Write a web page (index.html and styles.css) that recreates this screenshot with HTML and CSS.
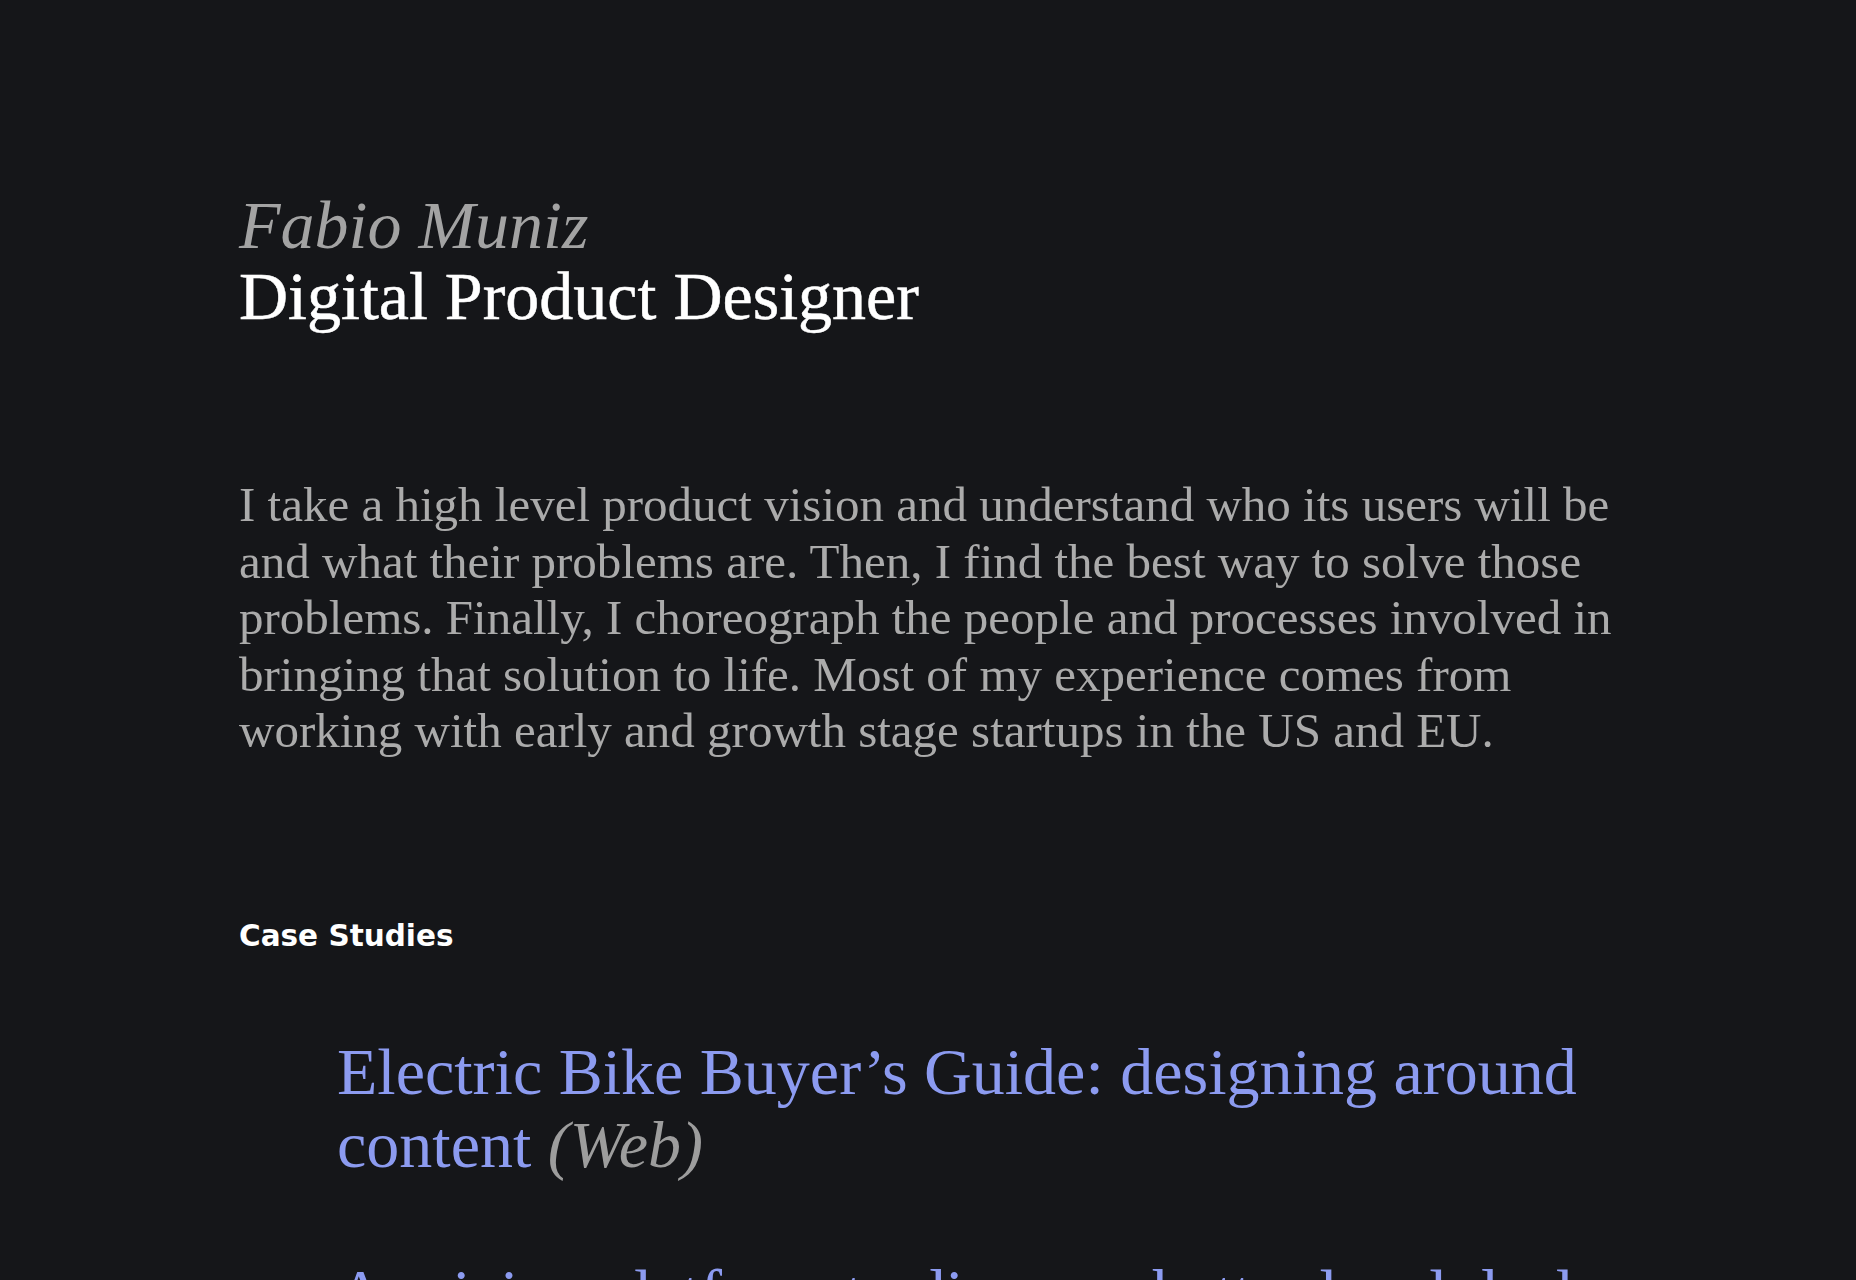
FILE: index.html
```html
<!DOCTYPE html>
<html lang="en">
<head>
    <meta charset="UTF-8">
    <meta name="viewport" content="width=device-width, initial-scale=1.0">
    <title>Fabio Muniz – Digital Product Designer</title>
    <link rel="stylesheet" href="styles.css">
</head>
<body>
    <main class="page">
        <header class="intro">
            <h1>
                <span class="name">Fabio Muniz</span>
                <span class="role">Digital Product Designer</span>
            </h1>
        </header>

        <p class="about">I take a high level product vision and understand who its users will be and what their problems are. Then, I find the best way to solve those problems. Finally, I choreograph the people and processes involved in bringing that solution to life. Most of my experience comes from working with early and growth stage startups in the US and EU.</p>

        <h2 class="section-title">Case Studies</h2>
        <ul class="cases">
            <li><a href="#">Electric Bike Buyer’s Guide: designing around content</a> <span class="tag">(Web)</span></li>
            <li><a href="#">A pricing platform to discover better local deals</a> <span class="tag">(Web)</span></li>
            <li><a href="#">Onboarding for a small business banking app</a> <span class="tag">(iOS)</span></li>
        </ul>
    </main>
</body>
</html>
```

FILE: styles.css
```css
body { margin: 0; background-color: #151619; font-family: "Liberation Serif", "Times New Roman", serif; }
.page { max-width: 1378px; margin: 0 auto; padding: 190px 0 160px; }
.intro h1 { margin: 0; font-size: 68px; line-height: 71px; font-weight: normal; }
.intro .name { display: block; font-style: italic; color: #a3a3a3; }
.intro .role { display: block; color: #fff; -webkit-text-stroke: 0.5px #fff; }
.about { margin: 145px 0 0; font-size: 49px; line-height: 56.5px; color: #ababab; }
.section-title { margin: 159px 0 0; font: 700 29.5px/34px "DejaVu Sans", sans-serif; color: #fff; }
.cases { list-style: none; margin: 82px 0 0; padding: 0 0 0 98px; }
.cases li { font-size: 66px; line-height: 73px; margin-bottom: 75px; }
.cases a { color: #8c9bf0; text-decoration: none; }
.cases .tag { font-style: italic; color: #9d9d9d; }
```
